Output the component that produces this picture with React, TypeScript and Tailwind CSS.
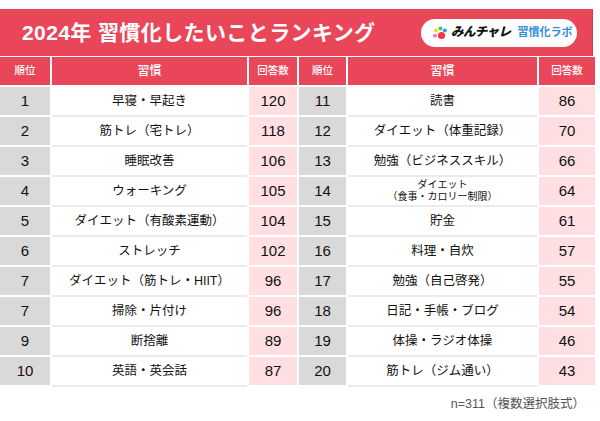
import React from 'react';

type Row = { rank: number; habit: React.ReactNode; count: number };

const left: Row[] = [
  { rank: 1, habit: '早寝・早起き', count: 120 },
  { rank: 2, habit: '筋トレ（宅トレ）', count: 118 },
  { rank: 3, habit: '睡眠改善', count: 106 },
  { rank: 4, habit: 'ウォーキング', count: 105 },
  { rank: 5, habit: 'ダイエット（有酸素運動）', count: 104 },
  { rank: 6, habit: 'ストレッチ', count: 102 },
  { rank: 7, habit: 'ダイエット（筋トレ・HIIT）', count: 96 },
  { rank: 7, habit: '掃除・片付け', count: 96 },
  { rank: 9, habit: '断捨離', count: 89 },
  { rank: 10, habit: '英語・英会話', count: 87 },
];

const right: Row[] = [
  { rank: 11, habit: '読書', count: 86 },
  { rank: 12, habit: 'ダイエット（体重記録）', count: 70 },
  { rank: 13, habit: '勉強（ビジネススキル）', count: 66 },
  {
    rank: 14,
    habit: (
      <span className="flex flex-col items-center text-[10px] leading-[12px]">
        <span>ダイエット</span>
        <span>（食事・カロリー制限）</span>
      </span>
    ),
    count: 64,
  },
  { rank: 15, habit: '貯金', count: 61 },
  { rank: 16, habit: '料理・自炊', count: 57 },
  { rank: 17, habit: '勉強（自己啓発）', count: 55 },
  { rank: 18, habit: '日記・手帳・ブログ', count: 54 },
  { rank: 19, habit: '体操・ラジオ体操', count: 46 },
  { rank: 20, habit: '筋トレ（ジム通い）', count: 43 },
];

function Logo() {
  return (
    <div className="flex shrink-0 items-center whitespace-nowrap h-[28px] w-[156px] rounded-full bg-white pl-[11px] gap-[3px]">
      <svg width="16" height="14" viewBox="0 0 16 14" className="shrink-0">
        <circle cx="4" cy="4.5" r="2" fill="#f5d81c" />
        <circle cx="8.5" cy="2.5" r="2" fill="#3cc36a" />
        <circle cx="12.8" cy="4.5" r="2" fill="#2f9be8" />
        <circle cx="3" cy="9.8" r="2" fill="#f57ab8" />
        <circle cx="9.5" cy="9.5" r="3.6" fill="#ec3b3b" />
      </svg>
      <span className="text-[12.5px] font-black italic text-[#111] tracking-[-0.6px]">みんチャレ</span>
      <span className="text-[11px] font-bold text-[#2f8de0] ml-[4px]">習慣化ラボ</span>
    </div>
  );
}

const cellBase = 'flex items-center justify-center border-b-2';

function Cells({ r }: { r: Row }) {
  return (
    <>
      <div className={`${cellBase} border-white bg-[#d9d9d9] text-[15px]`}>{r.rank}</div>
      <div className={`${cellBase} border-[#ebebeb] bg-white text-[12.5px]`}>{r.habit}</div>
      <div className={`${cellBase} border-white bg-[#ffdfe1] text-[15px]`}>{r.count}</div>
    </>
  );
}

export default function App() {
  return (
    <div
      className="w-[600px] h-[421px] bg-white pt-[9px] text-[#111]"
      style={{ fontFamily: '"Liberation Sans", "Noto Sans CJK JP", sans-serif' }}
    >
      <div className="w-[593px] h-[47px] bg-[#ea4659] flex items-center justify-between pl-[22px] pr-[15px] border-r border-[#d93a4d]">
        <h1 className="text-white text-[21px] font-bold tracking-[0.4px] whitespace-nowrap">2024年 習慣化したいことランキング</h1>
        <Logo />
      </div>

      <div className="mt-[1px] w-[593px] grid grid-cols-[50px_195px_48px_47px_189px_56px] gap-x-[2px] grid-rows-[30px] auto-rows-[30px]">
        {['順位', '習慣', '回答数', '順位', '習慣', '回答数'].map((h, i) => (
          <div
            key={i}
            className={`flex items-center justify-center bg-[#ea4659] text-white border-b-2 border-white ${
              h === '習慣' ? 'text-[12px]' : 'text-[10.5px]'
            } font-medium`}
          >
            {h}
          </div>
        ))}
        {left.map((r, i) => (
          <React.Fragment key={i}>
            <Cells r={r} />
            <Cells r={right[i]} />
          </React.Fragment>
        ))}
      </div>

      <div className="w-[593px] flex justify-end pr-[8px] pt-[8px]">
        <span className="text-[12.5px] text-[#555]">n=311（複数選択肢式）</span>
      </div>
    </div>
  );
}
